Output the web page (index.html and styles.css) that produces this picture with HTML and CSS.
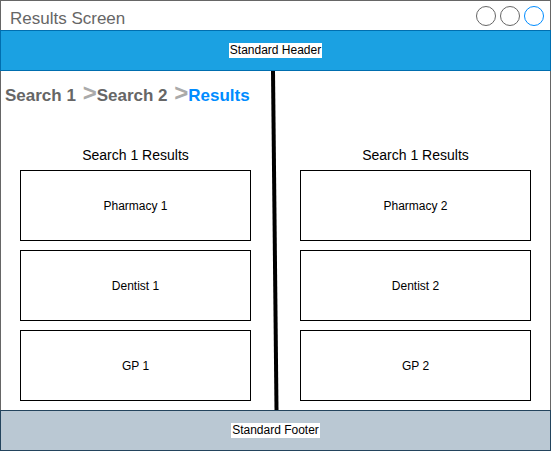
FILE: index.html
```html
<!DOCTYPE html>
<html>
<head>
<meta charset="utf-8">
<link rel="stylesheet" href="styles.css">
</head>
<body>
<div class="window">
  <div class="titlebar">
    <span class="title">Results Screen</span>
    <div class="controls">
      <span class="dot"></span>
      <span class="dot"></span>
      <span class="dot active"></span>
    </div>
  </div>
  <div class="bar header"><span class="label">Standard Header</span></div>
  <div class="main">
    <div class="breadcrumb"><span class="crumb">Search 1</span> <span class="sep">&gt;</span><span class="crumb">Search 2</span> <span class="sep">&gt;</span><span class="crumb current">Results</span></div>
    <div class="divider">
      <svg width="14" height="339" viewBox="0 0 14 339"><line x1="6" y1="0" x2="9.5" y2="339" stroke="#000" stroke-width="4"/></svg>
    </div>
    <section class="col col-left">
      <div class="col-title">Search 1 Results</div>
      <div class="card">Pharmacy 1</div>
      <div class="card">Dentist 1</div>
      <div class="card">GP 1</div>
    </section>
    <section class="col col-right">
      <div class="col-title">Search 1 Results</div>
      <div class="card">Pharmacy 2</div>
      <div class="card">Dentist 2</div>
      <div class="card">GP 2</div>
    </section>
  </div>
  <div class="bar footer"><span class="label">Standard Footer</span></div>
</div>
</body>
</html>
```
FILE: styles.css
```css
* { box-sizing: border-box; }
body {
  margin: 0;
  background: #fff;
  font-family: "Liberation Sans", Arial, Helvetica, sans-serif;
}
.window { width: 551px; }

.titlebar {
  height: 30px;
  border: 1px solid #666;
  border-bottom: none;
  display: flex;
  align-items: flex-start;
  justify-content: space-between;
  padding: 0 6px 0 9px;
}
.title {
  margin-top: 8px;
  font-size: 17px;
  line-height: 20px;
  color: #666;
}
.controls {
  display: flex;
  gap: 4px;
  margin-top: 5px;
}
.dot {
  width: 20px;
  height: 20px;
  border: 1px solid #666;
  border-radius: 50%;
}
.dot.active { border-color: #008cff; }

.bar {
  height: 41px;
  display: flex;
  align-items: center;
  justify-content: center;
}
.header { background: #1ba1e2; border: 1px solid #006eaf; }
.footer { background: #bac8d3; border: 1px solid #23445d; }
.label {
  background: #fff;
  color: #000;
  font-size: 12px;
  line-height: 15px;
  padding: 0 1px;
}

.main {
  height: 339px;
  border-left: 1px solid #666;
  border-right: 1px solid #666;
  display: grid;
  grid-template-columns: 266px 14px 1fr;
  grid-template-rows: 34px 1fr;
}
.breadcrumb {
  grid-row: 1;
  grid-column: 1;
  padding: 15px 0 0 4px;
  font-size: 17px;
  font-weight: bold;
  line-height: 19px;
  white-space: nowrap;
}
.crumb { color: #666; }
.crumb.current { color: #008cff; }
.sep {
  color: #aaa;
  font-size: 24px;
  line-height: 10px;
  margin-left: 2px;
}

.divider {
  grid-column: 2;
  grid-row: 1 / 3;
}
.divider svg { display: block; }

.col {
  grid-row: 2;
  padding: 42px 0 0 19px;
  display: flex;
  flex-direction: column;
  gap: 9px;
}
.col-left { grid-column: 1; }
.col-right { grid-column: 3; }
.col-title {
  width: 231px;
  text-align: center;
  font-size: 14px;
  line-height: 16px;
  color: #000;
  margin-bottom: -2px;
}
.card {
  width: 231px;
  height: 71px;
  border: 1px solid #000;
  display: flex;
  align-items: center;
  justify-content: center;
  font-size: 12px;
  color: #000;
}
```
